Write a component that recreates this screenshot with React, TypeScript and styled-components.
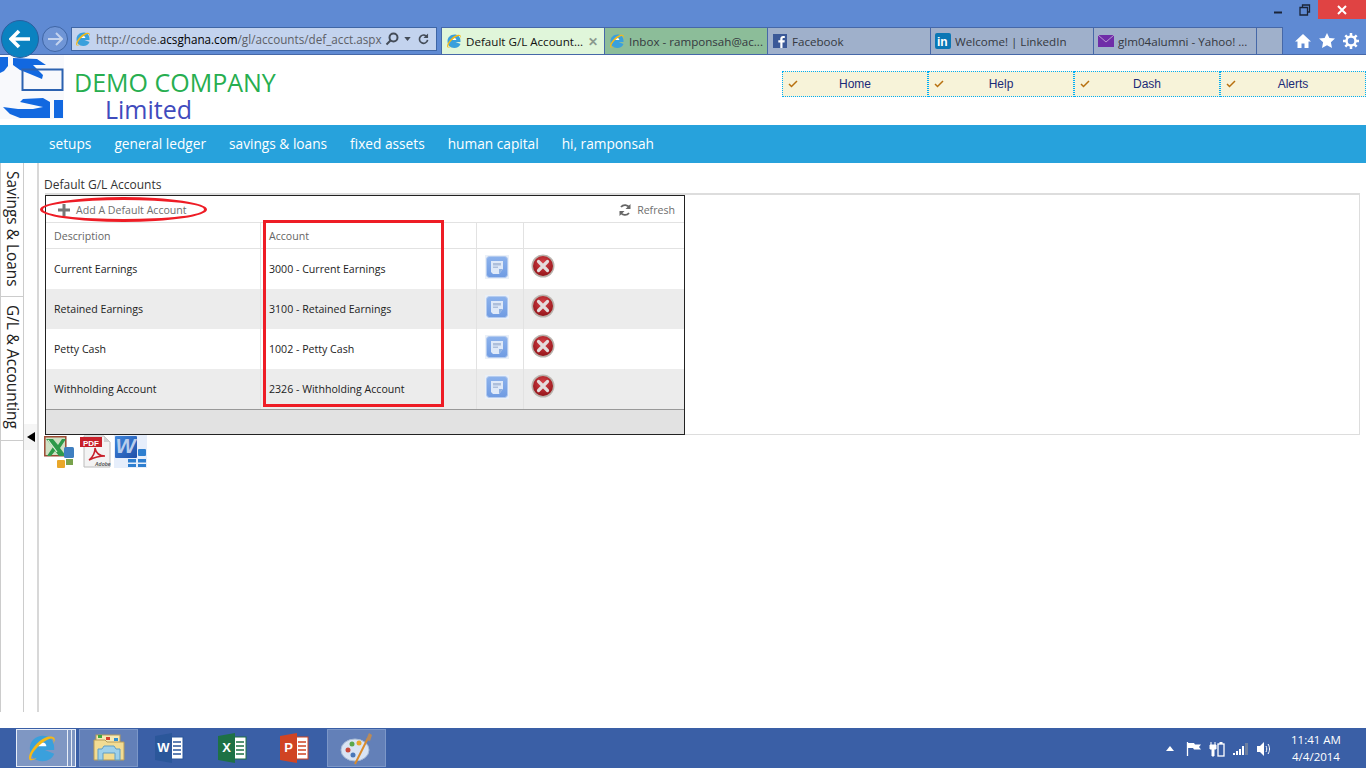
import styled, { createGlobalStyle } from "styled-components";

const GlobalStyle = createGlobalStyle`
  html, body {
    margin: 0;
    padding: 0;
    background: #fff;
    overflow: hidden;
  }
  * {
    box-sizing: border-box;
  }
`;

const UI_FONT = `"Open Sans", "Noto Sans", sans-serif`;

const Page = styled.div`
  width: 1366px;
  height: 768px;
  display: flex;
  flex-direction: column;
  font-family: ${UI_FONT};
`;

/* ---------- browser chrome ---------- */

const Chrome = styled.div`
  height: 55px;
  flex: none;
  background: #5f8ad3;
  display: flex;
  flex-direction: column;
  border-bottom: 1px solid #4668a8;
`;

const TitleRow = styled.div`
  height: 27px;
  flex: none;
  display: flex;
  justify-content: flex-end;
  align-items: flex-start;
`;

const WinButton = styled.div<{ $close?: boolean }>`
  width: ${(p) => (p.$close ? "48px" : "26px")};
  height: 19px;
  background: ${(p) => (p.$close ? "#e04343" : "transparent")};
  display: flex;
  align-items: center;
  justify-content: center;
`;

const NavRow = styled.div`
  flex: 1;
  display: flex;
  align-items: stretch;
  padding-left: 71px;
  position: relative;
`;

const BackButton = styled.div`
  position: absolute;
  left: 1px;
  top: -7px;
  width: 38px;
  height: 38px;
  border-radius: 50%;
  background: #0a82c0;
  border: 1px solid #2a5f9f;
  display: flex;
  align-items: center;
  justify-content: center;
`;

const ForwardButton = styled.div`
  position: absolute;
  left: 42px;
  top: -1px;
  width: 26px;
  height: 26px;
  border-radius: 50%;
  border: 1px solid #3f66a5;
  background: #6f95d6;
  display: flex;
  align-items: center;
  justify-content: center;
`;

const AddressBar = styled.div`
  width: 366px;
  height: 24px;
  background: #c3d3ee;
  border: 1px solid #3f66a5;
  display: flex;
  align-items: center;
  padding-left: 3px;
  font-size: 11.7px;
  color: #5d5f66;
  white-space: nowrap;
`;

const AddressText = styled.span`
  margin-left: 5px;
  width: 287px;

  b {
    font-weight: 400;
    color: #000;
  }
`;

const AddressTools = styled.span`
  display: flex;
  align-items: center;
  gap: 5px;
  margin-left: 2px;
`;

const RefreshGlyph = styled.span`
  display: flex;
  margin-left: 2px;
`;

const TabStrip = styled.div`
  margin-left: 4px;
  display: flex;
  height: 27px;
`;

const Tab = styled.div<{ $bg: string; $width?: number }>`
  width: ${(p) => p.$width ?? 163}px;
  background: ${(p) => p.$bg};
  border-left: 1px solid #4668a8;
  border-top: 1px solid #4668a8;
  display: flex;
  align-items: center;
  gap: 4px;
  padding-left: 4px;
  font-size: 11.6px;
  color: #34383f;
  white-space: nowrap;
  overflow: hidden;

  &:last-child {
    border-right: 1px solid #4668a8;
  }
`;

const ActiveTabLabel = styled.span`
  color: #111;
`;

const TabClose = styled.span`
  margin-left: 1px;
  color: #8a9a8e;
  font-size: 12px;
  font-weight: 700;
`;

const ChromeTools = styled.div`
  margin-left: 12px;
  display: flex;
  align-items: center;
  gap: 8px;
`;

/* ---------- page header ---------- */

const Header = styled.header`
  height: 70px;
  flex: none;
  display: flex;
  background: #fff;
`;

const Brand = styled.div`
  width: 782px;
  display: flex;
`;

const BrandText = styled.div`
  margin-left: 10px;
  padding-top: 13px;
  display: flex;
  flex-direction: column;
`;

const CompanyName = styled.div`
  font-size: 25px;
  line-height: 28px;
  color: #27ae50;
  white-space: nowrap;
`;

const CompanySuffix = styled.div`
  font-size: 25px;
  line-height: 26px;
  color: #3f4bbd;
  padding-left: 31px;
`;

const TopMenu = styled.nav`
  margin-top: 16px;
  display: flex;
  height: 26px;
`;

const TopMenuItem = styled.div`
  width: 146px;
  background: #f7f3d9;
  border: 1px dotted #00aef5;
  display: flex;
  align-items: center;
  padding-left: 5px;
  font-family: "Liberation Sans", Arial, sans-serif;
  font-size: 12px;
  color: #1a2a78;
`;

const TopMenuLabel = styled.span`
  flex: 1;
  text-align: center;
  padding-right: 15px;
`;

const BlueBar = styled.nav`
  height: 38px;
  flex: none;
  background: #27a2dc;
  display: flex;
  align-items: center;
  gap: 23px;
  padding: 0 0 2px 49px;
  color: #fff;
  font-size: 13.7px;
`;

/* ---------- main area ---------- */

const Main = styled.main`
  flex: 1;
  display: flex;
  min-height: 0;
  height: 549px;
`;

const SideTabs = styled.div`
  width: 24px;
  flex: none;
  border-left: 1px solid #ccc;
  border-right: 1px solid #ccc;
  display: flex;
  flex-direction: column;
`;

const SideTab = styled.div<{ $height: number }>`
  height: ${(p) => p.$height}px;
  writing-mode: vertical-rl;
  border-bottom: 1px solid #ccc;
  font-size: 15.4px;
  line-height: 22px;
  padding-top: 8px;
  color: #222;
  white-space: nowrap;
`;

const Splitter = styled.div`
  width: 15px;
  flex: none;
  border-right: 2px solid #d8d8d8;
  display: flex;
  flex-direction: column;
  padding-top: 261px;
`;

const SplitterHandle = styled.div`
  height: 26px;
  background: #f5f5f5;
  display: flex;
  align-items: center;
  justify-content: center;
`;

const Content = styled.section`
  flex: 1;
  padding: 14px 6px 0 5px;
  display: flex;
  flex-direction: column;
`;

const PageTitle = styled.div`
  font-size: 12px;
  line-height: 15px;
  color: #333;
  margin-bottom: 1px;
`;

const Panel = styled.div`
  position: relative;
  margin-left: 1px;
  height: 242px;
  border: 1px solid #ddd;
  border-top-width: 2px;
`;

const Grid = styled.div`
  width: 640px;
  height: 240px;
  margin-left: -1px;
  border: 1px solid #222;
  display: flex;
  flex-direction: column;
  font-size: 10.6px;
  color: #222;
`;

const GridToolbar = styled.div`
  height: 27px;
  flex: none;
  display: flex;
  align-items: center;
  justify-content: space-between;
  padding: 1px 9px 0 12px;
  color: #6f6f6f;
  border-bottom: 1px solid #e2e2e2;
`;

const ToolbarAction = styled.span`
  display: flex;
  align-items: center;
  gap: 6px;
`;

const GridRow = styled.div<{ $height: number; $bg?: string }>`
  height: ${(p) => p.$height}px;
  flex: none;
  display: grid;
  grid-template-columns: 215px 216px 47px 1fr;
  background: ${(p) => p.$bg ?? "transparent"};
`;

const HeaderRow = styled(GridRow)`
  color: #666;
  border-bottom: 1px solid #e2e2e2;
`;

const FooterRow = styled(GridRow)`
  border-top: 1px solid #999;
`;

const Cell = styled.div`
  display: flex;
  align-items: center;
  padding-left: 8px;
  border-right: 1px solid #e2e2e2;
  white-space: nowrap;

  &:last-child {
    border-right: none;
  }
`;

const IconCell = styled(Cell)`
  align-items: flex-start;
  padding-top: 6px;
`;

const DeleteCell = styled(IconCell)`
  padding: 5px 0 0 7px;
`;

const RedEllipse = styled.div`
  position: absolute;
  left: -6px;
  top: 2px;
  width: 167px;
  height: 25px;
  border: 3px solid #ee1c25;
  border-radius: 50%;
  pointer-events: none;
`;

const RedBox = styled.div`
  position: absolute;
  left: 217px;
  top: 25px;
  width: 181px;
  height: 187px;
  border: 3px solid #ee1c25;
  pointer-events: none;
`;

const ExportRow = styled.div`
  display: flex;
  gap: 2px;
  height: 33px;
`;

const ExportSlot = styled.span`
  width: 33px;
  height: 33px;
`;

/* ---------- taskbar ---------- */

const Gap = styled.div`
  height: 16px;
  flex: none;
`;

const Taskbar = styled.footer`
  height: 40px;
  flex: none;
  background: #3a5fa6;
  display: flex;
  align-items: stretch;
  padding: 1px 0 0 16px;
`;

const TaskButton = styled.div<{ $state?: "active" | "open" }>`
  width: ${(p) => (p.$state ? "59px" : "62.5px")};
  height: 38px;
  flex: none;
  display: flex;
  align-items: center;
  justify-content: center;
  border: ${(p) =>
    p.$state === "active"
      ? "1px solid #e8eef8"
      : p.$state === "open"
        ? "1px solid #7c97c8"
        : "1px solid transparent"};
  background: ${(p) =>
    p.$state === "active"
      ? "#7f97c3"
      : p.$state === "open"
        ? "#6380b8"
        : "transparent"};
`;

const IeButton = styled(TaskButton)`
  width: 52px;
`;

const StackEdge = styled.div`
  width: 8px;
  height: 38px;
  margin-right: 3px;
  flex: none;
  border: 1px solid #e8eef8;
  border-left: none;
  background: linear-gradient(
    to right,
    #7f97c3 0,
    #7f97c3 3px,
    #e8eef8 3px,
    #e8eef8 4px,
    #7f97c3 4px
  );
`;

const PaintButton = styled(TaskButton)`
  margin-left: 1.5px;
`;

const Tray = styled.div`
  margin-left: auto;
  display: flex;
  align-items: center;
  color: #fff;
`;

const TrayIcons = styled.div`
  display: flex;
  align-items: center;
  gap: 8px;
`;

const TrayArrow = styled.span`
  display: flex;
  margin-right: 4px;
`;

const Clock = styled.div`
  width: 88px;
  margin-right: 6px;
  padding-bottom: 2px;
  text-align: center;
  font-size: 11.5px;
  line-height: 17px;
`;

/* ---------- icons ---------- */

const IeIcon = ({ size = 16 }: { size?: number }) => (
  <svg width={size} height={size} viewBox="0 0 32 32" style={{ flex: "none" }}>
    <path
      d="M9 14h16c0-5-3.500-8-8.500-8S7 10 7 16.500 11 26 16.500 26c4 0 7-1.600 8.500-5h-5.500c-.8 1.200-1.800 1.700-3 1.700-2.600 0-4.300-1.700-4.500-4.700h17v-2c0-8-5-13-12-13C9.500 3 3 8.500 3 16.500S8.500 30 16.500 30c6 0 10.500-3 12.500-8"
      fill="#3aa0dc"
    />
    <path d="M12 14c.4-2.500 2-4 4.500-4s4 1.500 4.200 4z" fill="#fff" />
    <path
      d="M27 4c-7-2-18 6-24 18-1 3-1.500 6 .5 7 2 .8 5-1 7-2.500-3 1.500-5.500 2-6 1-.7-1.500 1-6 5-10.500C15 11 23 5 27 6c2 .5 2 3 .5 6 2.500-3.500 3.500-7 -.5-8z"
      fill="#f5b916"
    />
  </svg>
);

const CheckMark = () => (
  <svg width="10" height="8" viewBox="0 0 10 8" style={{ flex: "none" }}>
    <path d="M1 4l2.500 2.500L9 1" fill="none" stroke="#b8700f" strokeWidth="1.500" />
  </svg>
);

const CompanyLogo = () => (
  <svg width="64" height="64" viewBox="0 0 64 64" style={{ flex: "none" }}>
    <rect width="64" height="64" fill="#f8f9fc" />
    <path d="M0 2h8v9l-4 5-4 2z" fill="#1268e0" />
    <path d="M13 3l24 1 9 6H33l10 10-1 4-12-5-10-4-7-5z" fill="#1268e0" />
    <rect x="22.500" y="14.500" width="40" height="20.500" fill="none" stroke="#2c62b0" strokeWidth="2" />
    <path d="M3 52l15 2h15l10-2-23-5 3-3 20-1 7 4v16H20l-10-4z" fill="#1268e0" />
    <rect x="54" y="45" width="9" height="18" fill="#1268e0" />
  </svg>
);

const EditIcon = () => (
  <svg width="24" height="24" viewBox="0 0 24 24">
    <defs>
      <linearGradient id="edit-face" x1="0" y1="0" x2="0" y2="1">
        <stop offset="0" stopColor="#8cb2ec" />
        <stop offset="1" stopColor="#6f9be2" />
      </linearGradient>
    </defs>
    <rect width="24" height="24" fill="#eaf0f8" />
    <rect x="1.500" y="1.500" width="21" height="21" rx="3" fill="url(#edit-face)" stroke="#b4cbef" />
    <path d="M6 6h12v8l-4 5H8l-2-2z" fill="#dfe9f8" />
    <path d="M8 8h8v2.500H8zM8 11.500h5v1.500H8z" fill="#aebfdb" />
    <path d="M14 19v-5h4z" fill="#8fb0e2" />
  </svg>
);

const DeleteIcon = () => (
  <svg width="24" height="24" viewBox="0 0 24 24">
    <defs>
      <radialGradient id="red-ball" cx="50%" cy="35%" r="70%">
        <stop offset="0" stopColor="#d8434a" />
        <stop offset="1" stopColor="#8f1015" />
      </radialGradient>
    </defs>
    <circle cx="12" cy="12" r="11.500" fill="#b9b2ac" />
    <circle cx="12" cy="12" r="10" fill="url(#red-ball)" />
    <path d="M7.500 7.500l9 9M16.500 7.500l-9 9" stroke="#e4dcdc" strokeWidth="3.200" strokeLinecap="round" />
  </svg>
);

const ExcelExport = () => (
  <svg width="33" height="33" viewBox="0 0 33 33">
    <path d="M.8 1.800h21v19h-21z" fill="#cfe0c4" stroke="#9c4a34" strokeWidth="1.500" />
    <path d="M2 4h7l5 6 4-6h4l-6 9 6 8h-7l-4-5-4 5H3l6-9z" fill="#2f9a4a" />
    <path d="M4 5l9 12" stroke="#e4f0dc" strokeWidth="1.200" />
    <rect x="20" y="12" width="10" height="11" rx="1.500" fill="#3f7fc0" />
    <rect x="22" y="24" width="7" height="6" fill="#78a24c" />
    <rect x="13" y="25" width="8" height="8" rx="1" fill="#e9a72a" />
  </svg>
);

const PdfExport = () => (
  <svg width="33" height="33" viewBox="0 0 33 33">
    <path d="M5 1h20l6 6v25H5z" fill="#f3f3f3" stroke="#bcbcbc" />
    <path d="M25 1v6h6z" fill="#d0d0d0" />
    <rect x="1" y="2" width="22" height="10" fill="#c8202a" />
    <text x="4" y="10.500" fontSize="8" fontWeight="700" fontFamily="Liberation Sans" fill="#fff">PDF</text>
    <path d="M10 25c4-3 6-8 6-12 1 5 4 8 10 8-5 0-10 1-16 4z" fill="none" stroke="#c8202a" strokeWidth="1.500" />
    <text x="16" y="31" fontSize="5" fontStyle="italic" fontWeight="700" fontFamily="Liberation Sans" fill="#555">Adobe</text>
  </svg>
);

const WordExport = () => (
  <svg width="33" height="33" viewBox="0 0 33 33">
    <defs>
      <linearGradient id="word-face" x1="0" y1="0" x2="1" y2="1">
        <stop offset="0" stopColor="#3f86dc" />
        <stop offset="1" stopColor="#1f4fa8" />
      </linearGradient>
    </defs>
    <rect width="33" height="33" fill="#e6eefb" />
    <rect x="1" y="1" width="22" height="22" rx="1" fill="url(#word-face)" />
    <text x="1.500" y="18" fontSize="21" fontWeight="700" fontStyle="italic" fontFamily="Liberation Sans" fill="#b9cdec" textLength="20" lengthAdjust="spacingAndGlyphs">W</text>
    <rect x="24" y="14" width="8" height="7" rx="1" fill="#2e7fd0" />
    <rect x="14" y="24" width="8" height="3.500" fill="#2e7fd0" />
    <rect x="24" y="24" width="8" height="3.500" fill="#2e7fd0" />
    <rect x="14" y="29" width="8" height="3" fill="#2e7fd0" />
    <rect x="24" y="29" width="8" height="3" fill="#2e7fd0" />
  </svg>
);

const FolderIcon = () => (
  <svg width="32" height="30" viewBox="0 0 32 30">
    <rect x="3" y="2" width="24" height="8" fill="#f6e9b5" stroke="#b79b58" />
    <rect x="5" y="2" width="4" height="3" fill="#3ea83e" />
    <rect x="13" y="4" width="4" height="3" fill="#d8402c" />
    <rect x="21" y="5" width="4" height="3" fill="#2e8ed0" />
    <path d="M1 7h11l2 2h17v18H1z" fill="#f2dc93" stroke="#b79b58" />
    <path d="M5 27V16h4l2-3h10l2 3h4v11h-5v-7H10v7z" fill="#9ed0ea" stroke="#5f9dc4" />
  </svg>
);

const OfficeIcon = ({ letter, color }: { letter: string; color: string }) => (
  <svg width="30" height="32" viewBox="0 0 30 32">
    <rect x="12" y="5" width="17" height="22" fill="#fff" stroke={color} />
    <path d="M19 10h8M19 14h8M19 18h8M19 22h8" stroke={color} strokeWidth="1.500" />
    <path d="M1 4l17-3v30L1 28z" fill={color} />
    <text x="9.500" y="20" textAnchor="middle" fontSize="13" fontWeight="700" fontFamily="Liberation Sans" fill="#fff">
      {letter}
    </text>
  </svg>
);

const PaintIcon = () => (
  <svg width="34" height="34" viewBox="0 0 34 34">
    <ellipse cx="15" cy="19" rx="14" ry="11" fill="#d9e4f3" stroke="#a9bcd6" />
    <circle cx="8" cy="19" r="2.500" fill="#c94a3c" />
    <circle cx="12" cy="13" r="2.500" fill="#5aa84a" />
    <circle cx="19" cy="12" r="2.500" fill="#e9a72a" />
    <circle cx="13" cy="24" r="2.500" fill="#4a78b8" />
    <path d="M15 33L28 7" stroke="#d98a2a" strokeWidth="2" />
    <path d="M26 9l3-7 3 2-2 6z" fill="#b98a5a" />
  </svg>
);

const TrayFlag = () => (
  <svg width="15" height="14" viewBox="0 0 15 14">
    <path d="M1.500 0v14" stroke="#fff" strokeWidth="1.300" />
    <path d="M2 1h6l1 1.500h6L13 5l2 2.500H8l-1-1.500H2z" fill="#fff" />
  </svg>
);

const TrayPower = () => (
  <svg width="16" height="16" viewBox="0 0 16 16">
    <path d="M1 4h6v4H5v7H3V8H1zM2 1v3M6 1v3" fill="#fff" stroke="#fff" />
    <rect x="9" y="3" width="6" height="12" fill="none" stroke="#fff" strokeWidth="1.300" />
    <rect x="10.500" y="1" width="3" height="2" fill="#fff" />
  </svg>
);

const TraySignal = () => (
  <svg width="16" height="12" viewBox="0 0 16 12">
    <rect x="0" y="10" width="2" height="2" fill="#fff" />
    <rect x="3" y="8" width="2" height="4" fill="#fff" />
    <rect x="6" y="6" width="2" height="6" fill="#fff" />
    <rect x="9" y="3" width="2" height="9" fill="#fff" />
    <rect x="12" y="0" width="3" height="12" fill="#6d7f9f" />
  </svg>
);

const TrayVolume = () => (
  <svg width="15" height="14" viewBox="0 0 15 14">
    <path d="M0 4h3l4-4v14l-4-4H0z" fill="#fff" />
    <path d="M9 4c1 2 1 4 0 6M11 2c2 3 2 7 0 10" fill="none" stroke="#fff" />
  </svg>
);

const MENU = ["Home", "Help", "Dash", "Alerts"];
const NAV = [
  "setups",
  "general ledger",
  "savings & loans",
  "fixed assets",
  "human capital",
  "hi, ramponsah",
];
const ACCOUNTS = [
  { name: "Current Earnings", code: "3000" },
  { name: "Retained Earnings", code: "3100" },
  { name: "Petty Cash", code: "1002" },
  { name: "Withholding Account", code: "2326" },
];

export default function App() {
  return (
    <Page>
      <GlobalStyle />
      <Chrome>
        <TitleRow>
          <WinButton>
            <svg width="10" height="10" viewBox="0 0 10 10">
              <path d="M0 7.500h8" stroke="#1a2438" strokeWidth="2" />
            </svg>
          </WinButton>
          <WinButton>
            <svg width="12" height="12" viewBox="0 0 12 12">
              <path d="M3.500 3V1h7v7H8.500M1 3.500h7.500v7.500H1z" fill="none" stroke="#1a2438" strokeWidth="1.300" />
            </svg>
          </WinButton>
          <WinButton $close>
            <svg width="10" height="10" viewBox="0 0 10 10">
              <path d="M1 1l8 8M9 1l-8 8" stroke="#fff" strokeWidth="2" />
            </svg>
          </WinButton>
        </TitleRow>
        <NavRow>
          <BackButton>
            <svg width="22" height="20" viewBox="0 0 22 20">
              <path d="M10 2L2 10l8 8M3 10h18" fill="none" stroke="#fff" strokeWidth="3.600" />
            </svg>
          </BackButton>
          <ForwardButton>
            <svg width="16" height="14" viewBox="0 0 16 14">
              <path d="M9 1l6 6-6 6M14 7H1" fill="none" stroke="#c3d3ee" strokeWidth="2" />
            </svg>
          </ForwardButton>
          <AddressBar>
            <IeIcon />
            <AddressText>
              http://code.<b>acsghana.com</b>/gl/accounts/def_acct.aspx
            </AddressText>
            <AddressTools>
              <svg width="14" height="14" viewBox="0 0 14 14">
                <circle cx="8.500" cy="5.500" r="4" fill="none" stroke="#444c58" strokeWidth="2" />
                <path d="M5.500 8.500L1.500 12.500" stroke="#444c58" strokeWidth="2" />
              </svg>
              <svg width="7" height="4" viewBox="0 0 8 5">
                <path d="M0 0h8L4 5z" fill="#444c58" />
              </svg>
              <RefreshGlyph>
                <svg width="11" height="12" viewBox="0 0 12 12">
                  <path d="M10 4a4.500 4.500 0 1 0 .5 3" fill="none" stroke="#444c58" strokeWidth="1.800" />
                  <path d="M11 0v5H6z" fill="#444c58" />
                </svg>
              </RefreshGlyph>
            </AddressTools>
          </AddressBar>
          <TabStrip>
            <Tab $bg="#e0f6da">
              <IeIcon />
              <ActiveTabLabel>Default G/L Account...</ActiveTabLabel>
              <TabClose>✕</TabClose>
            </Tab>
            <Tab $bg="#8cbd99">
              <IeIcon />
              <span>Inbox - ramponsah@ac...</span>
            </Tab>
            <Tab $bg="#9fb0cb">
              <svg width="16" height="14" viewBox="-1 0 16 14" style={{ flex: "none" }}>
                <rect width="14" height="14" fill="#3b5998" />
                <path d="M9.500 14V8.500h2l.3-2.200H9.500V5c0-.7.2-1.100 1.100-1.100h1.200V2c-.5-.1-1-.1-1.700-.1-1.700 0-2.800 1-2.800 2.900v1.500H5.300v2.200h2V14z" fill="#fff" />
              </svg>
              <span>Facebook</span>
            </Tab>
            <Tab $bg="#9fb0cb">
              <svg width="16" height="16" viewBox="0 0 16 16" style={{ flex: "none" }}>
                <rect width="16" height="16" rx="2" fill="#0a77b5" />
                <text x="2" y="13" fontSize="12" fontWeight="700" fontFamily="Liberation Sans" fill="#fff">in</text>
              </svg>
              <span>Welcome! | LinkedIn</span>
            </Tab>
            <Tab $bg="#9fb0cb">
              <svg width="16" height="12" viewBox="0 0 16 12" style={{ flex: "none" }}>
                <rect width="16" height="12" fill="#6f2da8" />
                <path d="M0 0l8 7 8-7" fill="none" stroke="#b79bd0" />
              </svg>
              <span>glm04alumni - Yahoo! ...</span>
            </Tab>
            <Tab $bg="#9fb0cb" $width={27} />
          </TabStrip>
          <ChromeTools>
            <svg width="16" height="14" viewBox="0 0 16 14">
              <path d="M8 0L0 7.500h2.500V14h4V9.500h3V14h4V7.500H16z" fill="#fff" />
            </svg>
            <svg width="16" height="15" viewBox="0 0 16 15">
              <path d="M8 0l2.400 5 5.600.6-4.100 3.700L13 15 8 12.200 3 15l1.100-5.700L0 5.600 5.600 5z" fill="#fff" />
            </svg>
            <svg width="16" height="16" viewBox="0 0 16 16">
              <circle cx="8" cy="8" r="4.500" fill="none" stroke="#fff" strokeWidth="2.500" />
              <path d="M8 0v3M8 13v3M0 8h3M13 8h3M2.300 2.300l2.100 2.100M11.600 11.600l2.100 2.100M2.300 13.700l2.100-2.100M11.600 4.400l2.100-2.100" stroke="#fff" strokeWidth="2.500" />
            </svg>
          </ChromeTools>
        </NavRow>
      </Chrome>

      <Header>
        <Brand>
          <CompanyLogo />
          <BrandText>
            <CompanyName>DEMO COMPANY</CompanyName>
            <CompanySuffix>Limited</CompanySuffix>
          </BrandText>
        </Brand>
        <TopMenu>
          {MENU.map((item) => (
            <TopMenuItem key={item}>
              <CheckMark />
              <TopMenuLabel>{item}</TopMenuLabel>
            </TopMenuItem>
          ))}
        </TopMenu>
      </Header>

      <BlueBar>
        {NAV.map((item) => (
          <span key={item}>{item}</span>
        ))}
      </BlueBar>

      <Main>
        <SideTabs>
          <SideTab $height={134}>Savings &amp; Loans</SideTab>
          <SideTab $height={144}>G/L &amp; Accounting</SideTab>
        </SideTabs>
        <Splitter>
          <SplitterHandle>
            <svg width="8" height="10" viewBox="0 0 8 10">
              <path d="M8 0v10L0 5z" fill="#000" />
            </svg>
          </SplitterHandle>
        </Splitter>
        <Content>
          <PageTitle>Default G/L Accounts</PageTitle>
          <Panel>
            <Grid>
              <GridToolbar>
                <ToolbarAction>
                  <svg width="12" height="12" viewBox="0 0 12 12">
                    <path d="M4.500 0h3v4.500H12v3H7.500V12h-3V7.500H0v-3h4.500z" fill="#777" />
                  </svg>
                  Add A Default Account
                </ToolbarAction>
                <ToolbarAction>
                  <svg width="12" height="12" viewBox="0 0 12 12">
                    <path d="M10.500 4A5 5 0 0 0 2 3M1.500 8A5 5 0 0 0 10 9" fill="none" stroke="#666" strokeWidth="1.800" />
                    <path d="M11.500 0v5h-5zM.5 12V7h5z" fill="#666" />
                  </svg>
                  Refresh
                </ToolbarAction>
              </GridToolbar>
              <HeaderRow $height={26}>
                <Cell>Description</Cell>
                <Cell>Account</Cell>
                <Cell />
                <Cell />
              </HeaderRow>
              {ACCOUNTS.map((account, i) => (
                <GridRow key={account.code} $height={40} $bg={i % 2 ? "#ececec" : undefined}>
                  <Cell>{account.name}</Cell>
                  <Cell>
                    {account.code} - {account.name}
                  </Cell>
                  <IconCell>
                    <EditIcon />
                  </IconCell>
                  <DeleteCell>
                    <DeleteIcon />
                  </DeleteCell>
                </GridRow>
              ))}
              <FooterRow $height={25} $bg="#e2e2e2">
                <Cell />
                <Cell />
                <Cell />
                <Cell />
              </FooterRow>
            </Grid>
            <RedEllipse />
            <RedBox />
          </Panel>
          <ExportRow>
            <ExportSlot>
              <ExcelExport />
            </ExportSlot>
            <ExportSlot>
              <PdfExport />
            </ExportSlot>
            <ExportSlot>
              <WordExport />
            </ExportSlot>
          </ExportRow>
        </Content>
      </Main>

      <Gap />
      <Taskbar>
        <IeButton $state="active">
          <IeIcon size={30} />
        </IeButton>
        <StackEdge />
        <TaskButton $state="open">
          <FolderIcon />
        </TaskButton>
        <TaskButton>
          <OfficeIcon letter="W" color="#2b579a" />
        </TaskButton>
        <TaskButton>
          <OfficeIcon letter="X" color="#1e7145" />
        </TaskButton>
        <TaskButton>
          <OfficeIcon letter="P" color="#d04423" />
        </TaskButton>
        <PaintButton $state="open">
          <PaintIcon />
        </PaintButton>
        <Tray>
          <TrayIcons>
            <TrayArrow>
              <svg width="8" height="5" viewBox="0 0 8 5">
                <path d="M4 0l4 5H0z" fill="#fff" />
              </svg>
            </TrayArrow>
            <TrayFlag />
            <TrayPower />
            <TraySignal />
            <TrayVolume />
          </TrayIcons>
          <Clock>
            <div>11:41 AM</div>
            <div>4/4/2014</div>
          </Clock>
        </Tray>
      </Taskbar>
    </Page>
  );
}
